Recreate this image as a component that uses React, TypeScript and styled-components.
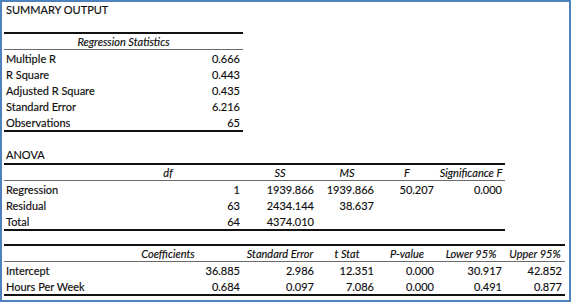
import React from "react";
import styled, { createGlobalStyle } from "styled-components";

const GlobalStyle = createGlobalStyle`
  html, body {
    margin: 0;
    padding: 0;
    background: #fff;
  }
  body {
    font-family: Lato, "Liberation Sans", sans-serif;
  }
`;

// excel column widths, A..G
const COLS = [89, 150, 74, 60, 60, 68, 60];

const Sheet = styled.div`
  box-sizing: border-box;
  width: 571px;
  height: 302px;
  border: 2px solid #4f81bd;
  padding: 0 2px;
  background: #fff;
  color: #0d0d0d;
  font-size: 11px;
  display: flex;
  flex-direction: column;
  -webkit-text-stroke: 0.15px #0d0d0d;
`;

const Label = styled.div<{ $gap?: number }>`
  height: 16px;
  line-height: 16px;
  padding-left: 2px;
  margin-top: ${(p) => p.$gap || 0}px;
  white-space: nowrap;
`;

const Table = styled.div<{ $cols: number; $gap?: number }>`
  display: grid;
  grid-template-columns: ${(p) =>
    COLS.slice(0, p.$cols)
      .map((w) => `${w}px`)
      .join(" ")};
  width: fit-content;
  margin-top: ${(p) => p.$gap || 0}px;
  border-top: 2px solid #111;
  border-bottom: 2px solid #111;
`;

const Head = styled.div<{ $span?: number }>`
  grid-column: span ${(p) => p.$span || 1};
  height: 15px;
  line-height: 16px;
  border-bottom: 1px solid #6a6a6a;
  font-style: italic;
  text-align: center;
  white-space: nowrap;
`;

const Cell = styled.div<{ $num?: boolean }>`
  height: 16px;
  line-height: 17px;
  padding: 0 3px 0 2px;
  text-align: ${(p) => (p.$num ? "right" : "left")};
  white-space: nowrap;
`;

const stats: [string, string][] = [
  ["Multiple R", "0.666"],
  ["R Square", "0.443"],
  ["Adjusted R Square", "0.435"],
  ["Standard Error", "6.216"],
  ["Observations", "65"],
];

const anovaHead = ["", "df", "SS", "MS", "F", "Significance F"];
const anova: string[][] = [
  ["Regression", "1", "1939.866", "1939.866", "50.207", "0.000"],
  ["Residual", "63", "2434.144", "38.637", "", ""],
  ["Total", "64", "4374.010", "", "", ""],
];

const coefHead = ["", "Coefficients", "Standard Error", "t Stat", "P-value", "Lower 95%", "Upper 95%"];
const coef: string[][] = [
  ["Intercept", "36.885", "2.986", "12.351", "0.000", "30.917", "42.852"],
  ["Hours Per Week", "0.684", "0.097", "7.086", "0.000", "0.491", "0.877"],
];

const Rows = ({ rows }: { rows: string[][] }) => (
  <>
    {rows.map((r, i) =>
      r.map((v, j) => (
        <Cell key={`${i}-${j}`} $num={j > 0}>
          {v}
        </Cell>
      ))
    )}
  </>
);

export default function App() {
  return (
    <>
      <GlobalStyle />
      <Sheet>
        <Label>SUMMARY OUTPUT</Label>

        <Table $cols={2} $gap={14}>
          <Head $span={2}>Regression Statistics</Head>
          <Rows rows={stats} />
        </Table>

        <Label $gap={15}>ANOVA</Label>
        <Table $cols={6}>
          {anovaHead.map((h, i) => (
            <Head key={i}>{h}</Head>
          ))}
          <Rows rows={anova} />
        </Table>

        <Table $cols={7} $gap={13}>
          {coefHead.map((h, i) => (
            <Head key={i}>{h}</Head>
          ))}
          <Rows rows={coef} />
        </Table>
      </Sheet>
    </>
  );
}
